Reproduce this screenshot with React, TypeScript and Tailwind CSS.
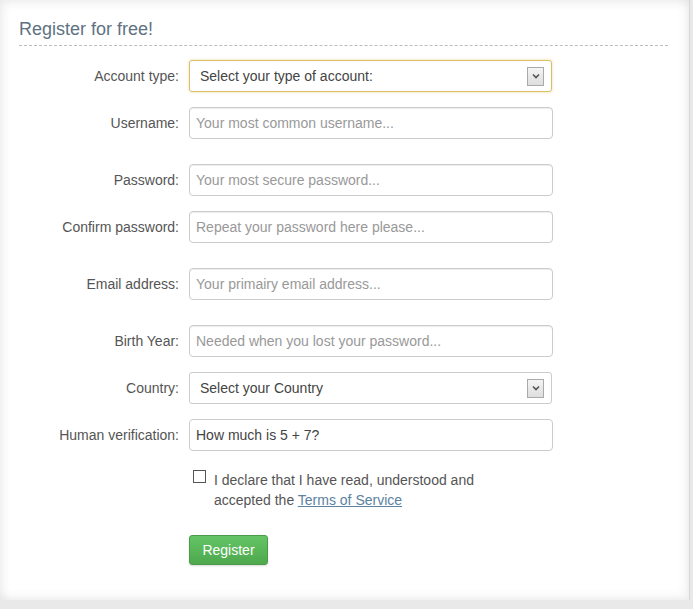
import React from "react";

const font = { fontFamily: '"Liberation Sans", Arial, sans-serif' };

function Label({ children }: { children: React.ReactNode }) {
  return (
    <div className="w-[179px] shrink-0 text-right text-[14px] text-[#555] pr-[0px]">{children}</div>
  );
}

function TextInput({ placeholder }: { placeholder: string }) {
  return (
    <input
      placeholder={placeholder}
      className="ml-[10px] w-[364px] h-[32px] rounded-[4px] border border-[#ccc] bg-white px-[6px] text-[14px] text-[#333] placeholder:text-[#999] outline-none shadow-[inset_0_1px_1px_rgba(0,0,0,0.075)]"
      style={font}
    />
  );
}

function Select({ text, highlight }: { text: string; highlight?: boolean }) {
  return (
    <div
      className={
        "ml-[10px] w-[363px] h-[32px] rounded-[3px] border bg-white flex items-center pl-[10px] pr-[7px] text-[14px] text-[#444] " +
        (highlight
          ? "border-[#d8bf6c] shadow-[0_0_3px_rgba(220,190,100,0.6)]"
          : "border-[#ccc]")
      }
    >
      <span className="flex-1">{text}</span>
      <div className="w-[17px] h-[19px] border border-[#a9a9a9] bg-gradient-to-b from-[#f4f4f4] to-[#dedede] flex items-center justify-center">
        <svg width="8" height="6" viewBox="0 0 8 6">
          <path d="M1 1.5 L4 4.5 L7 1.5" fill="none" stroke="#555" strokeWidth="1.6" />
        </svg>
      </div>
    </div>
  );
}

export default function App() {
  return (
    <div className="w-[693px] h-[609px] bg-[#e9e9e9] overflow-hidden" style={font}>
      <div className="w-[690px] h-[600px] bg-white shadow-[inset_3px_3px_10px_rgba(0,0,0,0.07),inset_-4px_-4px_10px_rgba(0,0,0,0.05)] border-r border-[#d8d8d8] pl-[19px] pr-[21px] pt-[17px]">
        <div className="text-[18px] leading-[24px] text-[#5e7283] pb-[4px] border-b border-dashed border-[#bdbdbd]">
          Register for free!
        </div>
        <div className="flex flex-col pt-[14px]">
          <div className="flex items-center -ml-[19px]">
            <Label>Account type:</Label>
            <Select text="Select your type of account:" highlight />
          </div>
          <div className="flex items-center -ml-[19px] mt-[15px]">
            <Label>Username:</Label>
            <TextInput placeholder="Your most common username..." />
          </div>
          <div className="flex items-center -ml-[19px] mt-[25px]">
            <Label>Password:</Label>
            <TextInput placeholder="Your most secure password..." />
          </div>
          <div className="flex items-center -ml-[19px] mt-[15px]">
            <Label>Confirm password:</Label>
            <TextInput placeholder="Repeat your password here please..." />
          </div>
          <div className="flex items-center -ml-[19px] mt-[25px]">
            <Label>Email address:</Label>
            <TextInput placeholder="Your primairy email address..." />
          </div>
          <div className="flex items-center -ml-[19px] mt-[25px]">
            <Label>Birth Year:</Label>
            <TextInput placeholder="Needed when you lost your password..." />
          </div>
          <div className="flex items-center -ml-[19px] mt-[15px]">
            <Label>Country:</Label>
            <Select text="Select your Country" />
          </div>
          <div className="flex items-center -ml-[19px] mt-[15px]">
            <Label>Human verification:</Label>
            <div
              className="ml-[10px] w-[364px] h-[32px] rounded-[4px] border border-[#ccc] bg-white px-[6px] flex items-center text-[14px] text-[#444]"
            >
              How much is 5 + 7?
            </div>
          </div>
          <div className="flex items-start ml-[174px] mt-[19px]">
            <div className="w-[13px] h-[13px] border border-[#555] bg-white mt-[0px] shrink-0" />
            <div className="ml-[8px] text-[14px] leading-[20px] text-[#555] mt-0">
              I declare that I have read, understood and
              <br />
              accepted the{" "}
              <a href="#" className="text-[#5b82a0] underline">
                Terms of Service
              </a>
            </div>
          </div>
          <div className="ml-[170px] mt-[25px]">
            <button
              className="w-[79px] h-[30px] rounded-[3px] border border-[#4a9a4a] bg-gradient-to-b from-[#64c564] to-[#4ea84e] text-white text-[14px] shadow-[0_1px_2px_rgba(0,0,0,0.15)]"
              style={font}
            >
              Register
            </button>
          </div>
        </div>
      </div>
    </div>
  );
}
